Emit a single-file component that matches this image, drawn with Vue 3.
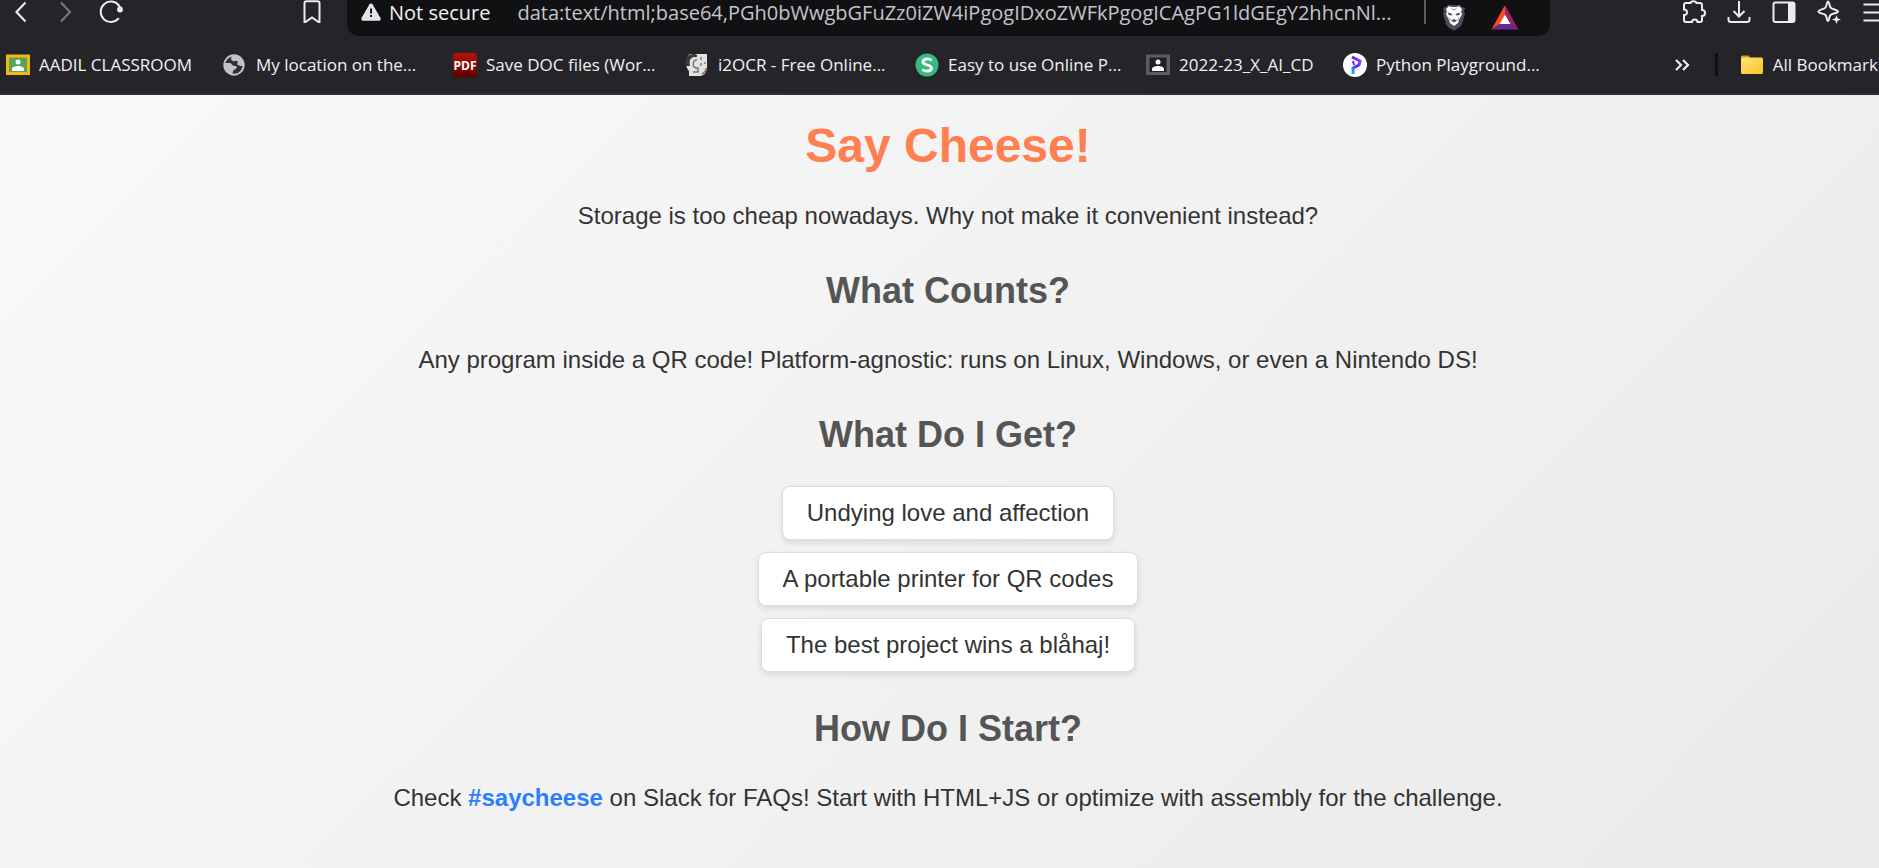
<script setup>
import { ref } from 'vue'

const address = ref('data:text/html;base64,PGh0bWwgbGFuZz0iZW4iPgogIDxoZWFkPgogICAgPG1ldGEgY2hhcnNl...')

const bookmarks = [
  { icon: 'classroom', label: 'AADIL CLASSROOM' },
  { icon: 'globe', label: 'My location on the...' },
  { icon: 'pdf', label: 'Save DOC files (Wor...' },
  { icon: 'ocr', label: 'i2OCR - Free Online...' },
  { icon: 'sejda', label: 'Easy to use Online P...' },
  { icon: 'classroom-dark', label: '2022-23_X_AI_CD' },
  { icon: 'python', label: 'Python Playground...' }
]

const rewards = [
  'Undying love and affection',
  'A portable printer for QR codes',
  'The best project wins a blåhaj!'
]
</script>

<template>
  <div class="window">
    <header class="chrome">
      <div class="toolbar">
        <div class="nav">
          <button type="button" aria-label="Back">
            <svg viewBox="0 0 24 24"><path d="M16.500 2.500 7.500 12l9 9.500" class="line bold" /></svg>
          </button>
          <button type="button" aria-label="Forward" class="dim">
            <svg viewBox="0 0 24 24"><path d="m7 2.500 9 9.500-9 9.500" class="line bold" /></svg>
          </button>
          <button type="button" aria-label="Reload">
            <svg viewBox="0 0 24 24"><path d="M19.800 18.200A10.200 10.200 0 1 1 20 5.600" class="line" /><circle cx="21" cy="9.500" r="2.900" fill="currentColor" /><path d="M19 4.500 21.500 8" class="line" /></svg>
          </button>
        </div>
        <button type="button" aria-label="Bookmark this tab">
          <svg viewBox="0 0 24 24"><path d="M6.500 1.300h11a2 2 0 0 1 2 2V22h-1L12 17.500 5.500 22h-1V3.300a2 2 0 0 1 2-2Z" class="line" /></svg>
        </button>
        <div class="address">
          <svg class="warning" viewBox="0 0 20 18"><path d="M8.500 1.300a1.800 1.800 0 0 1 3 0l8 13.700a1.800 1.800 0 0 1-1.500 2.700H2a1.800 1.800 0 0 1-1.500-2.700Z" fill="#e4e3e9" /><path d="M9.100 5.500h1.900v5H9.100zM9.100 12h1.900v2H9.100z" fill="#111113" /></svg>
          <span class="insecure">Not secure</span>
          <input v-model="address" type="text" aria-label="Address" spellcheck="false">
          <span class="bar"></span>
          <button type="button" aria-label="Shields">
            <svg viewBox="0 0 24 26"><path d="M6 0h12l2 2 3 1-1 3 1 3-3 10c-1 3-5 5-8 6.500-3-1.500-7-3.500-8-6.500L1 9l1-3-1-3 3-1Z" fill="#4b4c5f" /><path d="M7 1 9 2h6l2-1 3 3-1 3 1 2-3 6-1 3-4 3-4-3-1-3-3-6 1-2-1-3Z" fill="#fff" /><path d="m6 7.500 4.500 1.500-1 1.500-3-.5ZM18 7.500 13.500 9l1 1.500 3-.5ZM9 15.500l3-1.500 3 1.500-3 2Z" fill="#4b4c5f" /><path d="M9.500 3.500 12 5l2.500-1.500M7 12.500l1.500 3M17 12.500l-1.500 3" fill="none" stroke="#8b8c9a" stroke-width="1" /></svg>
          </button>
          <button type="button" aria-label="Rewards" class="rewards-button">
            <svg viewBox="0 0 28 24"><path d="M14-1v9.500L8.500 18 .5 23.500Z" fill="#ff4a19" /><path d="M14-1v9.500l5.500 9.500 8 5.500Z" fill="#9e1f63" /><path d="m.5 23.500 8-5.500h11l8 5.500Z" fill="#662d91" /><path d="m14 8.500 5.500 9.500h-11Z" fill="#fff" /></svg>
          </button>
        </div>
        <div class="tools">
          <button type="button" aria-label="Extensions">
            <svg viewBox="0 0 24 24"><path d="M2 5a2 2 0 0 1 2-2h4.500c.5-2.500 5.500-2.500 6 0H18a2 2 0 0 1 2 2v5c4 0 4 6 0 6v4a2 2 0 0 1-2 2h-2.500c0-3.500-5.500-3.500-5.500 0H4a2 2 0 0 1-2-2v-5c4 .5 4-5.500 0-5.500Z" class="line" /></svg>
          </button>
          <button type="button" aria-label="Downloads">
            <svg viewBox="0 0 24 24"><path d="M12 1v15M6.500 11l5.500 5.500 5.500-5.500M1.500 17v2.500a2.500 2.500 0 0 0 2.500 2.500h16a2.500 2.500 0 0 0 2.500-2.500V17" class="line" /></svg>
          </button>
          <button type="button" aria-label="Sidebar">
            <svg viewBox="0 0 24 24"><rect x="1.500" y="2.500" width="21" height="19.500" rx="2" class="line" /><path d="M16 2h6v20h-6Z" fill="currentColor" /></svg>
          </button>
          <button type="button" aria-label="Assistant">
            <svg viewBox="0 0 24 24"><path d="M11 1.500c1.200 0 1.300 4 2.500 6s7.500 2 7.500 4-5.500 1.500-7.500 3.500-1 6-2.500 6-1-4.500-2.500-6S1.500 13.500 1.500 11.500s5.500-2 7-4 1.300-6 2.500-6Z" class="line" /><path d="m19.500 15 1.200 3.300L24 19.500l-3.300 1.200-1.200 3.300-1.200-3.300-3.300-1.200 3.300-1.200Z" fill="currentColor" /></svg>
          </button>
          <button type="button" aria-label="Menu">
            <svg viewBox="0 0 24 24"><path d="M1.500 4.500h21M1.500 12.500h21M1.500 20.500h21" class="line" /></svg>
          </button>
        </div>
      </div>

      <nav class="bookmarks" aria-label="Bookmarks">
        <a v-for="item in bookmarks" :key="item.label" href="#" class="bookmark">
          <svg v-if="item.icon === 'classroom'" viewBox="0 0 24 24"><path d="M0 1.500h24V22H0Z" fill="#f4b90a" /><path d="M3 4.500h18V19H3Z" fill="#57a35b" /><circle cx="12" cy="9" r="2.500" fill="#fff" /><path d="M6 18v-2c0-4 12-4 12 0v2Z" fill="#fff" /></svg>
          <svg v-else-if="item.icon === 'classroom-dark'" viewBox="0 0 24 24"><path d="M0 1.500h24V22H0Z" fill="#5c5d61" /><path d="M3.500 4.500h17V19h-17Z" fill="#202124" /><circle cx="12" cy="9" r="2.500" fill="#fff" /><path d="M6 18v-2c0-4 12-4 12 0v2Z" fill="#fff" /></svg>
          <svg v-else-if="item.icon === 'globe'" viewBox="0 0 24 24"><circle cx="11" cy="12" r="9.700" fill="#303136" stroke="#c0c2c7" stroke-width="2" /><path d="M1.500 10h5c3 0 2 3 5 3s3 2 1 3-3 2-3 5.500C4 21 0 16 1.500 10Z" fill="#c0c2c7" /><path d="M10 2c-2 2-3 5 0 6s2-1 4 0-1 3 1 4 3 1 5.500 1C22 7 16 1 10 2Z" fill="#c0c2c7" /></svg>
          <svg v-else-if="item.icon === 'pdf'" viewBox="0 0 24 24"><defs><linearGradient id="pdf-red" x2="0" y2="1"><stop stop-color="#b81205" /><stop offset="1" stop-color="#5f0000" /></linearGradient></defs><rect width="24" height="24" rx="3" fill="url(#pdf-red)" /><text x="12" y="17" class="pdf-text">PDF</text></svg>
          <svg v-else-if="item.icon === 'ocr'" viewBox="0 0 24 24"><path d="M5 1h17v13c0 5-3 9-7 9H4v-5C0 14 0 5 5 1Z" fill="#e2e2e2" /><path d="M1 13C-1 6 3 0 10 1c3 1 3 3 0 3-5 0-6 4-5 9Z" fill="#38383a" /><path d="M12 7c-5 0-5 8 0 8h1v4H8M21 15c0 3-2 5-4 6" fill="none" stroke="#747476" stroke-width="1.500" /><path d="M15 4h2v3h-2ZM19 9h2v2h-2ZM15 10h2v3h-2Z" fill="#98989a" /></svg>
          <svg v-else-if="item.icon === 'sejda'" viewBox="0 0 24 24"><circle cx="12" cy="12" r="11.500" fill="#37b982" /><path d="M16.500 7.500C14 5 8 5.500 8 9c0 4 8.500 2 8.500 6 0 3.500-6 4-9 1.500" fill="none" stroke="#fff" stroke-width="2.800" /></svg>
          <svg v-else viewBox="0 0 24 24"><defs><linearGradient id="python-ink" x1="0" y1="1" x2="1" y2="0"><stop stop-color="#20c4ff" /><stop offset=".5" stop-color="#4b28ef" /><stop offset="1" stop-color="#ba35ff" /></linearGradient></defs><circle cx="12" cy="12" r="12" fill="#fff" /><path d="m9 4 8 4-1 4-6 3v6" fill="none" stroke="url(#python-ink)" stroke-width="3" /><path d="m10 8 1 4" stroke="#5b2cf2" stroke-width="2" /></svg>
          <span>{{ item.label }}</span>
        </a>
        <div class="more">
          <button type="button" aria-label="More bookmarks">
            <svg viewBox="0 0 24 24"><path d="m6 7 5 5-5 5M13 7l5 5-5 5" class="line bold" /></svg>
          </button>
          <span class="divider"></span>
          <a href="#" class="bookmark">
            <svg viewBox="0 0 24 24"><defs><linearGradient id="folder" x2="1" y2="1"><stop stop-color="#ffe474" /><stop offset="1" stop-color="#f7c32c" /></linearGradient></defs><path d="M1 4a1.500 1.500 0 0 1 1.500-1.500h6L10.500 5H22v8H1Z" fill="#d9a10c" /><rect x="1" y="4.500" width="22" height="16.500" rx="1.500" fill="url(#folder)" /></svg>
            <span>All Bookmarks</span>
          </a>
        </div>
      </nav>
    </header>

    <main class="page">
      <h1>Say Cheese!</h1>
      <p class="lead">Storage is too cheap nowadays. Why not make it convenient instead?</p>
      <h2>What Counts?</h2>
      <p>Any program inside a QR code! Platform-agnostic: runs on Linux, Windows, or even a Nintendo DS!</p>
      <h2>What Do I Get?</h2>
      <ul>
        <li v-for="reward in rewards" :key="reward">{{ reward }}</li>
      </ul>
      <h2>How Do I Start?</h2>
      <p>Check <a href="#">#saycheese</a> on Slack for FAQs! Start with HTML+JS or optimize with assembly for the challenge.</p>
    </main>
  </div>
</template>

<style>
body {
  margin: 0;
}
</style>

<style scoped>
.window {
  display: flex;
  flex-direction: column;
  min-height: 100vh;
  overflow: hidden;
}

/* The window runs slightly past the right edge of the screen. */
.chrome,
.page {
  box-sizing: border-box;
  width: calc(100% + 17px);
}

.chrome {
  background: #252429;
  border-bottom: 2px solid #302d36;
  color: #f1f1f4;
  font-family: "Open Sans", "Noto Sans", sans-serif;
}

button {
  display: block;
  flex: none;
  padding: 0;
  border: 0;
  background: none;
  color: #ececf0;
}

svg {
  display: block;
  flex: none;
  width: 24px;
  height: 24px;
}

.line {
  fill: none;
  stroke: currentColor;
  stroke-width: 2;
}

.bold {
  stroke-width: 2.2;
}

.dim {
  color: #77767c;
}

.pdf-text {
  fill: #fff;
  font-size: 12px;
  font-weight: bold;
  text-anchor: middle;
}

.toolbar {
  display: flex;
  align-items: flex-start;
  height: 36px;
  padding: 0 10px 0 9px;
}

.nav {
  display: flex;
  gap: 21px;
  margin-right: 177px;
}

.address {
  display: flex;
  flex: 1;
  min-width: 0;
  height: 36px;
  margin-left: 23px;
  padding: 0 31px 0 14px;
  border-radius: 0 0 12px 12px;
  background: #111113;
  font-size: 20px;
  line-height: 26px;
}

.warning {
  width: 20px;
  height: 18px;
  margin: 3px 8px 0 0;
}

.insecure {
  margin-right: 27px;
  white-space: nowrap;
}

input {
  flex: 1;
  min-width: 0;
  height: 26px;
  padding: 0;
  border: 0;
  background: none;
  color: #c3c4cd;
  font: inherit;
}

.bar {
  width: 2px;
  height: 24px;
  margin: 0 16px;
  background: #5d5c61;
}

.address button svg {
  height: 26px;
}

.address .rewards-button {
  margin-left: 25px;
}

.address .rewards-button svg {
  width: 28px;
  height: 24px;
}

.tools {
  display: flex;
  gap: 21px;
  margin-left: 132px;
}

.bookmarks {
  display: grid;
  grid-template-columns: 217px 230px 232px 230px 231px 197px 200px 1fr;
  align-items: center;
  height: 57px;
  padding-left: 6px;
}

.bookmark {
  display: flex;
  align-items: center;
  gap: 9px;
  color: #f1f1f4;
  font-size: 17px;
  line-height: 24px;
  text-decoration: none;
  white-space: nowrap;
}

.more {
  display: flex;
  align-items: center;
  justify-content: flex-end;
  padding-right: 10px;
}

.divider {
  width: 3px;
  height: 23px;
  margin: 0 22px 0 21px;
  background: #111113;
}

.page {
  flex: 1;
  padding: 23px 24px 16px;
  background: linear-gradient(135deg, #f9f9f9, #eaeaea);
  color: #333;
  font-family: "Liberation Sans", Arial, sans-serif;
  font-size: 24px;
  line-height: 28px;
  text-align: center;
}

h1 {
  margin: 0;
  color: #ff7f50;
  font-size: 48px;
  line-height: 56px;
}

h2 {
  margin: 0;
  color: #555;
  font-size: 36px;
  line-height: 42px;
}

p {
  margin: 34px 0 40px;
}

.lead {
  margin-top: 28px;
}

.page a {
  color: #2a7fff;
  font-weight: bold;
  text-decoration: none;
}

ul {
  display: flex;
  flex-direction: column;
  align-items: center;
  gap: 12px;
  margin: 30px 0 36px;
  padding: 0;
  list-style: none;
}

li {
  padding: 12px 24px;
  border: 1px solid #ddd;
  border-radius: 8px;
  background: #fff;
  box-shadow: 0 3px 6px rgba(0, 0, 0, 0.1);
}
</style>
